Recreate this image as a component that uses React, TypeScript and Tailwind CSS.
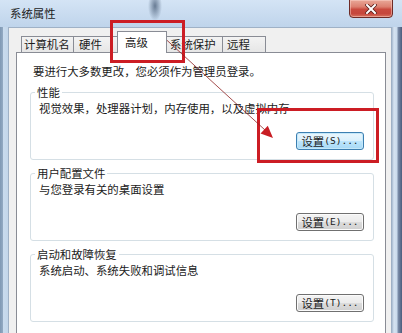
import React from "react";

function Btn({ label, k, def }: { label: string; k: string; def?: boolean }) {
  return (
    <div className="flex justify-end">
      <div
        className={
          def
            ? "w-[68px] h-[18px] rounded-[3px] border border-[#3c7fb1] bg-[linear-gradient(to_bottom,#eaf6fd_0%,#d9f0fc_50%,#bee6fd_50%,#a7d9f5_100%)] shadow-[inset_0_0_0_1px_#c4e8fa] flex items-center justify-center"
            : "w-[68px] h-[18px] rounded-[3px] border border-[#707070] bg-[linear-gradient(to_bottom,#f4f4f4_0%,#ebebeb_50%,#dddddd_50%,#cfcfcf_100%)] shadow-[inset_0_0_0_1px_#fbfbfb] flex items-center justify-center"
        }
      >
        <span className="leading-[16px]">{label}</span>
        <span className="font-['DejaVu_Sans_Mono',monospace] text-[9.5px] leading-[16px]">({k})...</span>
      </div>
    </div>
  );
}

function Group({ title, text, k, def }: { title: string; text: string; k: string; def?: boolean }) {
  return (
    <fieldset className="mt-[5px] border border-[#d5dfe5] rounded-[3px] pl-[8px] pr-[9px] pb-[9px]">
      <legend className="ml-[-4px] px-[2px] leading-[16px]">{title}</legend>
      <div className="leading-[16px]">{text}</div>
      <div className="mt-[16px]">
        <Btn label="设置" k={k} def={def} />
      </div>
    </fieldset>
  );
}

export default function App() {
  return (
    <div className="relative w-[402px] h-[333px] overflow-hidden flex flex-col bg-[#c6d9ee] text-[11.4px] leading-[16px] text-[#1b1b1b] font-['Noto_Sans_CJK_SC','Noto_Sans',sans-serif]">
      {/* title bar */}
      <div className="h-[27px] shrink-0 flex items-start bg-[radial-gradient(7px_15px_at_155px_6px,rgba(78,98,124,0.8),rgba(78,98,124,0)),linear-gradient(to_bottom,#d4e4f5,#bfd4eb)]">
        <span className="ml-[10px] mt-[5px] leading-[16px]">系统属性</span>
        <div className="ml-auto mr-[9px] -mt-px w-[44px] h-[19px] rounded-b-[4px] border border-[#6e2b26] bg-[linear-gradient(to_bottom,#e9a898_0%,#dc8070_40%,#c94a3e_55%,#c6473c_80%,#d7735f_100%)] shadow-[inset_0_0_0_1px_rgba(255,220,210,0.45)] flex items-center justify-center">
          <svg width="12" height="10" viewBox="0 0 12 10">
            <path d="M2 1 L10 9 M10 1 L2 9" stroke="#5a1f1a" strokeWidth="3.6" strokeLinecap="square" />
            <path d="M2 1 L10 9 M10 1 L2 9" stroke="#ffffff" strokeWidth="2" strokeLinecap="square" />
          </svg>
        </div>
      </div>

      {/* body */}
      <div className="flex flex-1 min-h-0">
        <div className="w-[8px] shrink-0 bg-[linear-gradient(to_right,#7f98b4_0px,#93aac3_3px,#c9dbee_3px,#c3d6ea_8px)]" />
        <div className="flex-1 min-w-0 border-t border-l border-r border-[#9fb1c6] bg-[#f0f0f0] flex flex-col pl-[7px] pr-[5px]">
          {/* tab strip */}
          <div className="h-[24px] shrink-0 flex items-end pl-[5px]">
            <div className="w-[53px] h-[16px] border border-b-0 border-[#898c95] bg-[linear-gradient(to_bottom,#f3f3f3,#e6e6e6)] pl-[2px] leading-[14px]">
              计算机名
            </div>
            <div className="-ml-px w-[45px] h-[16px] border border-b-0 border-[#898c95] bg-[linear-gradient(to_bottom,#f3f3f3,#e6e6e6)] pl-[5px] leading-[14px]">
              硬件
            </div>
            <div className="-ml-px relative z-10 -mb-px w-[50px] h-[22px] border border-b-0 border-[#898c95] bg-white pl-[7px] pt-[2px] leading-[16px]">
              高级
            </div>
            <div className="-ml-px w-[57px] h-[16px] border border-b-0 border-[#898c95] bg-[linear-gradient(to_bottom,#f3f3f3,#e6e6e6)] pl-[3px] leading-[14px]">
              系统保护
            </div>
            <div className="-ml-px w-[44px] h-[16px] border border-b-0 border-[#898c95] bg-[linear-gradient(to_bottom,#f3f3f3,#e6e6e6)] pl-[4px] leading-[14px]">
              远程
            </div>
          </div>

          {/* panel */}
          <div className="flex-1 border-t border-l border-r border-[#898c95] bg-white pt-[10px] pl-[13px] pr-[11px] flex flex-col">
            <div className="pl-[3px] leading-[16px]">要进行大多数更改，您必须作为管理员登录。</div>
            <Group title="性能" text="视觉效果，处理器计划，内存使用，以及虚拟内存" k="S" def />
            <Group title="用户配置文件" text="与您登录有关的桌面设置" k="E" />
            <Group title="启动和故障恢复" text="系统启动、系统失败和调试信息" k="T" />
          </div>
        </div>
        <div className="w-[10px] shrink-0 bg-[linear-gradient(to_right,#a7bad0_0px,#d6e3f1_2px,#c9daec_5px,#7d8fab_6px,#4a5c7c_10px)]" />
      </div>

      {/* annotations */}
      <svg className="absolute inset-0 pointer-events-none" width="402" height="333" viewBox="0 0 402 333">
        <rect x="111.5" y="21.5" width="72" height="40" fill="none" stroke="#cc1d24" strokeWidth="3" />
        <rect x="258.5" y="109.5" width="119" height="52" fill="none" stroke="#cc1d24" strokeWidth="3" />
        <line x1="159" y1="33" x2="265" y2="130" stroke="#8e2222" strokeWidth="0.8" />
        <polygon points="273,138 260.5,133.5 267.8,125.8" fill="#c81e24" />
      </svg>
    </div>
  );
}
